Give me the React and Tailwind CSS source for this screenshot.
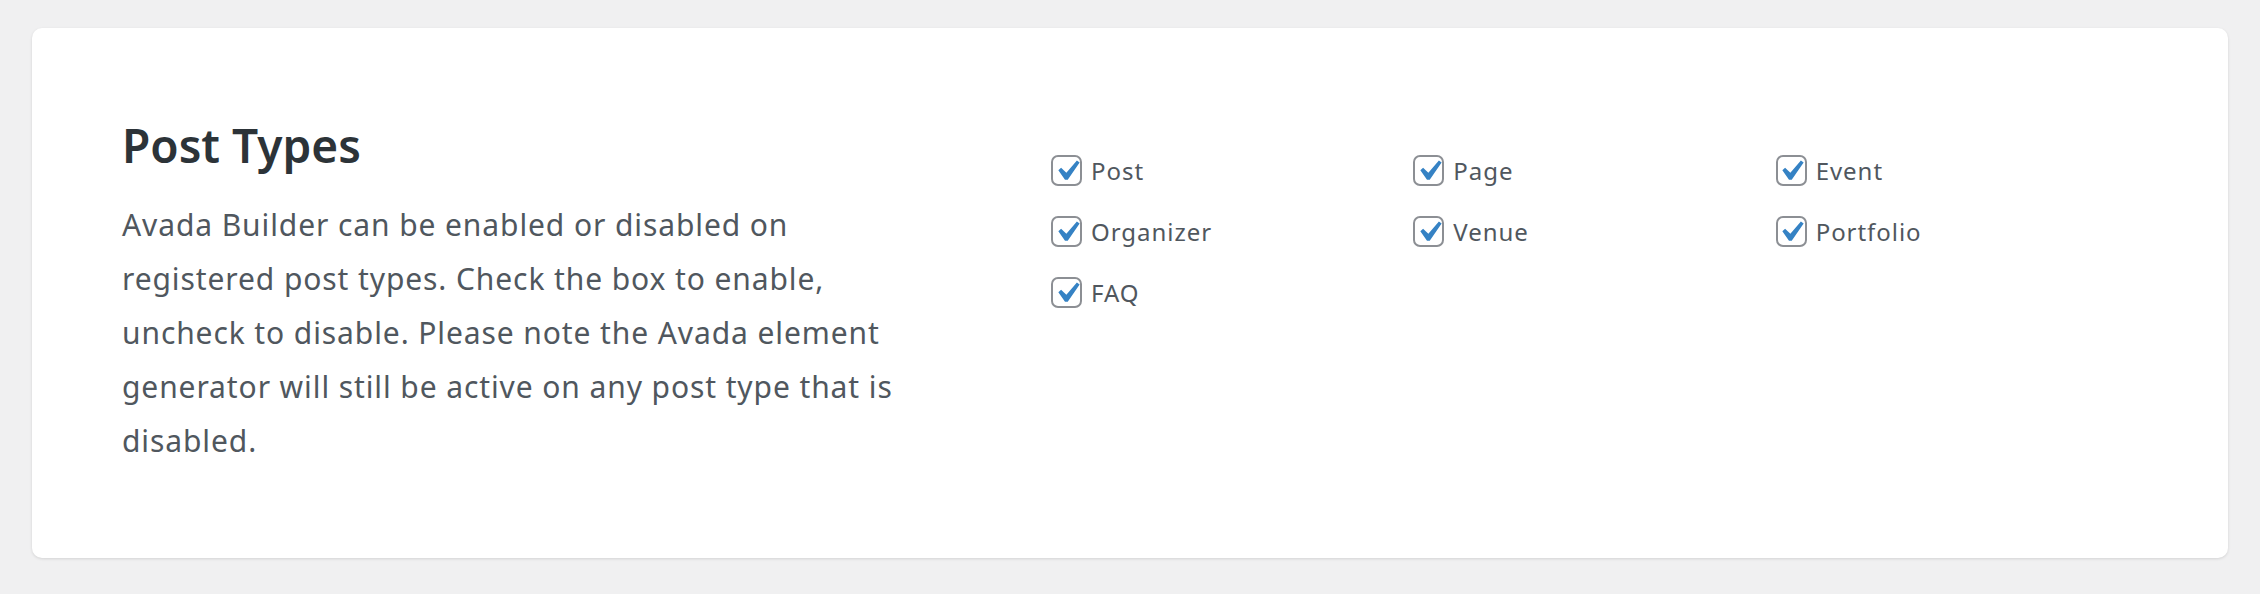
const postTypes = ['Post', 'Page', 'Event', 'Organizer', 'Venue', 'Portfolio', 'FAQ']

function CheckItem({ label }) {
  return (
    <label className="flex h-[61px] items-center gap-[9px]">
      <span className="relative flex h-[31px] w-[31px] shrink-0 items-center justify-center rounded-[7px] border-2 border-[#8c8f94] bg-white">
        <svg
          viewBox="0 0 20 20"
          className="absolute left-1/2 top-1/2 h-[41px] w-[41px] -translate-x-1/2 -translate-y-1/2"
        >
          <path fill="#3582c4" d="M14.83 4.89l1.34.94-5.81 8.38H9.02L5.78 9.67l1.34-1.25 2.57 2.4z" />
        </svg>
      </span>
      <span className="text-[24px] leading-none tracking-[0.04em] text-[#50575e]">{label}</span>
    </label>
  )
}

export default function App() {
  return (
    <div className="min-h-[594px] bg-[#f0f0f1] px-[32px] pt-[28px] font-['Noto_Sans',sans-serif]">
      {/* Settings card */}
      <div className="grid grid-cols-[929px_1fr] rounded-[10px] bg-white px-[90px] pb-[90px] pt-[90px] shadow-[0_1px_3px_rgba(0,0,0,0.12)]">
        <div>
          <h2 className="text-[46px] font-semibold leading-[55px] text-[#2c3338]">Post Types</h2>
          <p className="mt-[25px] max-w-[785px] text-[30px] leading-[54px] tracking-[0.03em] text-[#50575e]">
            Avada Builder can be enabled or disabled on registered post types. Check the box to enable,
            uncheck to disable. Please note the Avada element generator will still be active on any post
            type that is disabled.
          </p>
        </div>

        <div className="grid grid-cols-3 content-start pt-[22px]">
          {postTypes.map((t) => (
            <CheckItem key={t} label={t} />
          ))}
        </div>
      </div>
    </div>
  )
}
